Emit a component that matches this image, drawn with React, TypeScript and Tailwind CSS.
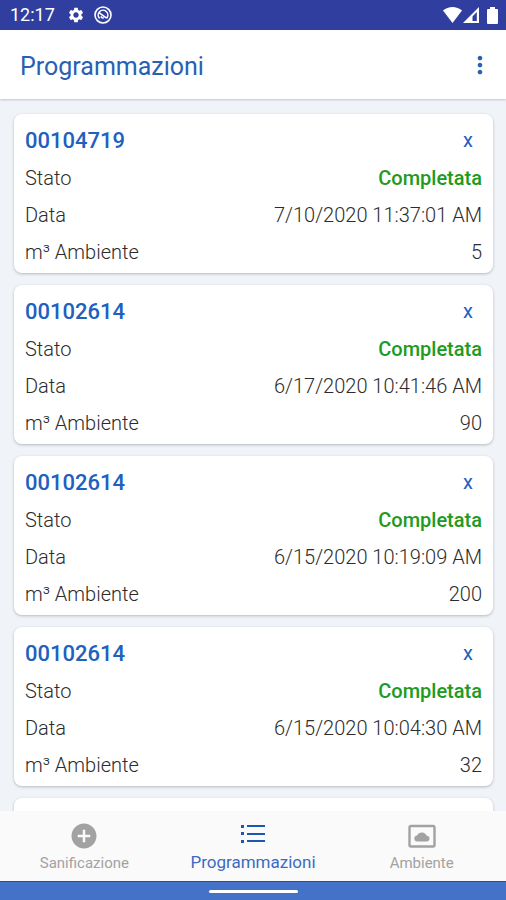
import type { ReactNode } from "react";
import { MdAddCircle, MdMoreVert, MdSettings } from "react-icons/md";

type Schedule = { code: string; status: string; date: string; volume: string };

const schedules: Schedule[] = [
  { code: "00104719", status: "Completata", date: "7/10/2020 11:37:01 AM", volume: "5" },
  { code: "00102614", status: "Completata", date: "6/17/2020 10:41:46 AM", volume: "90" },
  { code: "00102614", status: "Completata", date: "6/15/2020 10:19:09 AM", volume: "200" },
  { code: "00102614", status: "Completata", date: "6/15/2020 10:04:30 AM", volume: "32" },
];

const cardFrame = "shrink-0 rounded-lg bg-white shadow-[0_1px_3px_rgba(0,0,0,0.25)]";

function StatusBar() {
  return (
    <div className="flex h-[30px] shrink-0 items-center justify-between bg-[#303f9f] pl-[10px] pr-2 text-white">
      <div className="flex items-center">
        <span className="w-[57px] text-[18px] leading-[30px]">12:17</span>
        <MdSettings className="size-[18px]" aria-hidden="true" />
        <svg className="ml-[9px] size-[18px]" viewBox="0 0 18 18" fill="none" stroke="currentColor" aria-hidden="true">
          <circle cx="9" cy="9" r="8" strokeWidth="1.6" />
          <path d="M5.6 12.4A4.8 4.8 0 1 1 12.6 12.2M5.6 7.2L12.6 12.2" strokeWidth="1.6" />
          <path d="M6.8 10.4a2.6 2.6 0 0 0 3 1.4" strokeWidth="1.4" />
        </svg>
      </div>
      <div className="flex items-center">
        <svg className="h-4 w-[19px]" viewBox="0 0 19 16" fill="currentColor" aria-hidden="true">
          <path d="M0 3.6C5.3-1.1 13.7-1.1 19 3.6L9.5 16z" />
        </svg>
        <svg className="ml-px h-4 w-4" viewBox="0 0 16 16" fill="currentColor" fillRule="evenodd" aria-hidden="true">
          <path d="M0 16L16 0V16zM9.5 9.5V14H13.8V5z" />
        </svg>
        <svg className="ml-2 h-[17px] w-[11px]" viewBox="0 0 11 17" fill="currentColor" aria-hidden="true">
          <path d="M3 0h5v2h2q1 0 1 1v13q0 1-1 1H1q-1 0-1-1V3q0-1 1-1h2z" />
        </svg>
      </div>
    </div>
  );
}

function Row({ label, children }: { label: string; children: ReactNode }) {
  return (
    <div className="flex h-[37px] items-center justify-between">
      <dt>{label}</dt>
      <dd>{children}</dd>
    </div>
  );
}

function ScheduleCard({ item }: { item: Schedule }) {
  return (
    <article className={`${cardFrame} h-[159px] px-[11px] pt-[7px]`}>
      <header className="flex h-[38px] items-center justify-between text-[#2060bf]">
        <h2 className="text-[22px] font-medium">{item.code}</h2>
        <button type="button" className="w-7 text-xl" aria-label={`x ${item.code}`}>
          x
        </button>
      </header>
      <dl className="text-xl font-light text-[#2c2c2c]">
        <Row label="Stato">
          <span className="font-medium text-[#219a21]">{item.status}</span>
        </Row>
        <Row label="Data">{item.date}</Row>
        <Row label="m³ Ambiente">{item.volume}</Row>
      </dl>
    </article>
  );
}

function BottomNav() {
  const tab = "flex flex-1 flex-col items-center pt-[10px] text-[15px] leading-6 text-[#a2a2a2]";
  return (
    <nav className="flex h-[70px] shrink-0 bg-[#fafafa]">
      <button type="button" className={tab}>
        <MdAddCircle className="size-[30px]" aria-hidden="true" />
        <span>Sanificazione</span>
      </button>
      <button
        type="button"
        aria-current="page"
        className="flex flex-1 flex-col items-center pt-[13px] text-[17px] leading-7 text-[#3a6bc4]"
      >
        <svg className="h-5 w-6" viewBox="0 0 24 20" fill="#1c57b3" aria-hidden="true">
          <path d="M0 1h3v3H0zM6 1h18v2H6zM0 8h3v3H0zM6 9h18v2H6zM0 16h3v3H0zM6 16h18v2H6z" />
        </svg>
        <span className="mt-1">Programmazioni</span>
      </button>
      <button type="button" className={tab}>
        <svg className="size-[30px]" viewBox="0 0 30 30" aria-hidden="true">
          <rect x="2.5" y="5" width="25" height="20.5" rx="1.5" fill="none" stroke="currentColor" strokeWidth="2.4" />
          <path
            d="M10.6 20.4a3 3 0 0 1-.5-6 5.2 5.2 0 0 1 9.6 0.4 2.8 2.8 0 0 1 0 5.6z"
            fill="currentColor"
          />
        </svg>
        <span>Ambiente</span>
      </button>
    </nav>
  );
}

export default function App() {
  return (
    <div className="flex h-screen flex-col overflow-hidden bg-[#f0f4f9] font-[Roboto,sans-serif]">
      <StatusBar />
      <header className="z-10 flex h-[69px] shrink-0 items-center justify-between bg-white pl-5 pr-3 text-[#2860b4] shadow-[0_1px_2px_rgba(0,0,0,0.2)]">
        <h1 className="pt-1 text-[25px]">Programmazioni</h1>
        <button type="button" aria-label="Menu">
          <MdMoreVert className="size-7" />
        </button>
      </header>
      <main className="flex min-h-0 flex-1 flex-col gap-3 overflow-hidden pl-[14px] pr-[13px] pt-[15px]">
        {schedules.map((item, index) => (
          <ScheduleCard key={index} item={item} />
        ))}
        <div className={`${cardFrame} h-[159px]`} />
      </main>
      <BottomNav />
      <div className="flex h-[19px] shrink-0 items-center justify-center border-t border-[#1556ac] bg-[#4472c8]">
        <div className="mt-px h-[3px] w-[89px] rounded-sm bg-white" />
      </div>
    </div>
  );
}
